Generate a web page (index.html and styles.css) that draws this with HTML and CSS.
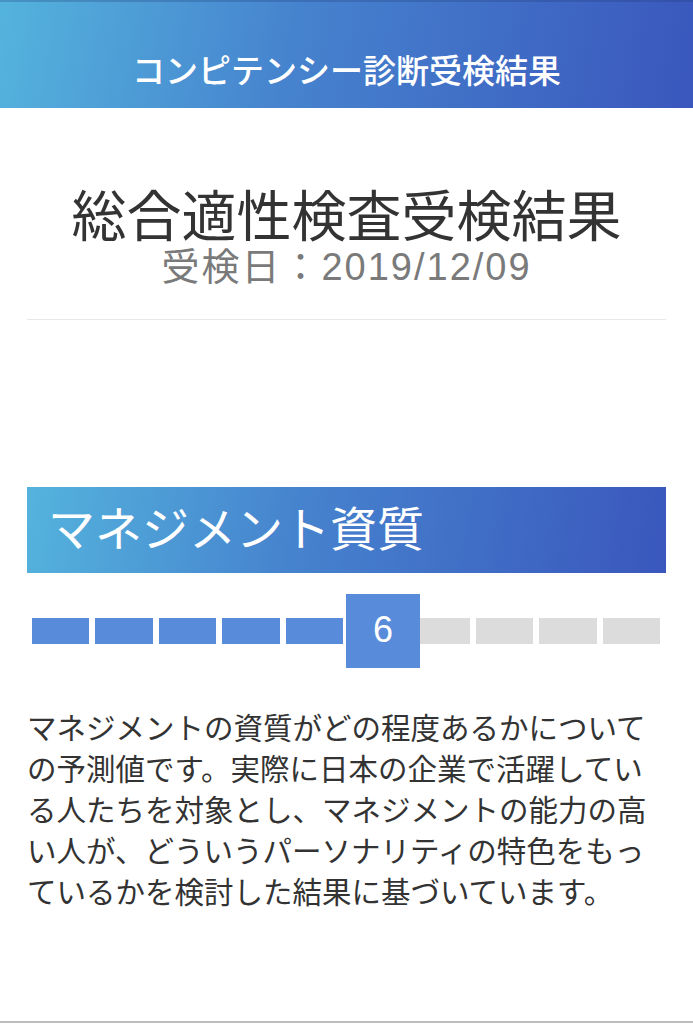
FILE: index.html
```html
<!DOCTYPE html>
<html lang="ja">
<head>
    <meta charset="UTF-8">
    <meta name="viewport" content="width=device-width, initial-scale=1.0">
    <title>コンピテンシー診断受検結果</title>
    <link rel="stylesheet" href="styles.css">
</head>
<body>
    <header class="app-header">
        <h1 class="app-title">コンピテンシー診断受検結果</h1>
    </header>
    <main class="page">
        <section class="summary">
            <h2 class="summary-title">総合適性検査受検結果</h2>
            <p class="summary-date">受検日：2019/12/09</p>
        </section>
        <section class="trait">
            <h3 class="trait-heading">マネジメント資質</h3>
            <div class="score-bar">
                <span class="segment filled"></span>
                <span class="segment filled"></span>
                <span class="segment filled"></span>
                <span class="segment filled"></span>
                <span class="segment filled"></span>
                <span class="segment filled current"><span class="score-badge">6</span></span>
                <span class="segment"></span>
                <span class="segment"></span>
                <span class="segment"></span>
                <span class="segment"></span>
            </div>
            <p class="trait-text">マネジメントの資質がどの程度あるかについての予測値です。実際に日本の企業で活躍している人たちを対象とし、マネジメントの能力の高い人が、どういうパーソナリティの特色をもっているかを検討した結果に基づいています。</p>
        </section>
    </main>
    <footer class="page-end"></footer>
</body>
</html>
```

FILE: styles.css
```css
body {
    margin: 0;
    padding: 0;
    background: #fff;
    color: #333;
    font-family: "Liberation Sans", "Noto Sans CJK JP", sans-serif;
}
.app-header {
    box-sizing: border-box;
    height: 108px;
    padding-top: 50px;
    background: linear-gradient(100deg, #54b3dd 0%, #4683ce 42%, #3a57bd 100%);
    border-top: 2px solid rgba(30, 60, 110, 0.25);
}
.app-title {
    margin: 0;
    margin-top: -2px;
    color: #fff;
    font-size: 33px;
    font-weight: 500;
    line-height: 44px;
    text-align: center;
}
.page {
    padding: 0 27px;
}
.summary {
    padding-top: 79px;
    padding-bottom: 32px;
    border-bottom: 1px solid #e8e8e8;
    text-align: center;
}
.summary-title {
    margin: 0;
    font-size: 55px;
    font-weight: 400;
    line-height: 60px;
    color: #333;
}
.summary-date {
    margin: 0;
    font-size: 38px;
    line-height: 40px;
    letter-spacing: 2px;
    color: #7a7a7a;
}
.trait {
    margin-top: 167px;
}
.trait-heading {
    margin: 0;
    height: 86px;
    padding-left: 21px;
    background: linear-gradient(100deg, #54b3dd 0%, #4683ce 42%, #3a57bd 100%);
    color: #fff;
    font-size: 47px;
    font-weight: 400;
    line-height: 86px;
}
.score-bar {
    display: flex;
    gap: 6px;
    margin: 45px 6px 0 5px;
}
.segment {
    flex: 1;
    height: 26px;
    background: #dcdcdc;
}
.segment.filled {
    background: #588bd9;
}
.segment.current {
    position: relative;
}
.score-badge {
    position: absolute;
    top: -24px;
    left: -3px;
    width: 74px;
    height: 74px;
    background: #588bd9;
    color: #fff;
    font-family: "Liberation Sans", sans-serif;
    font-size: 36px;
    line-height: 72px;
    text-align: center;
}
.trait-text {
    margin: 64px 0 0;
    font-size: 29.5px;
    line-height: 41px;
    color: #333;
}
.page-end {
    margin-top: 108px;
    border-top: 2px solid #bdbdbd;
}
```
